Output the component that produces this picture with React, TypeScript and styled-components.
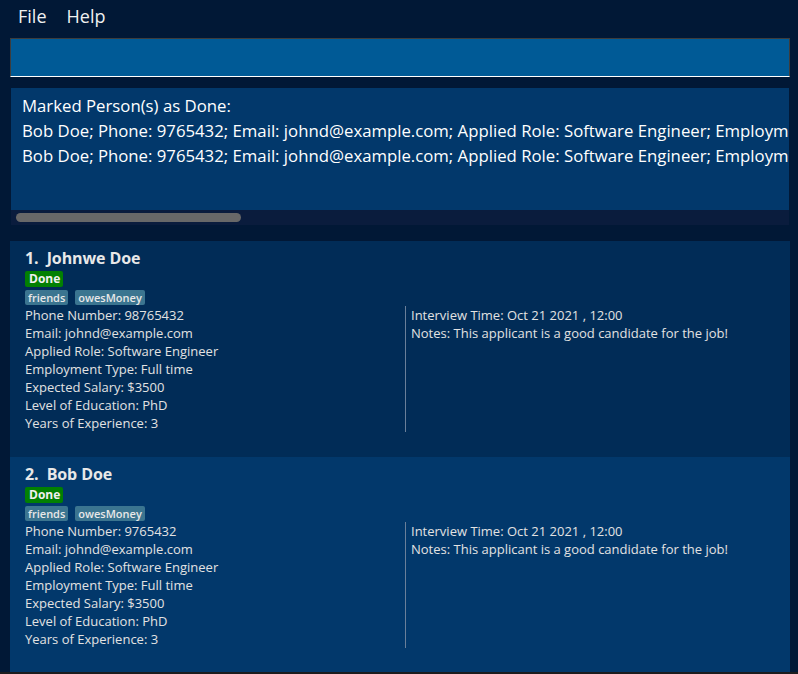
import styled, { createGlobalStyle } from "styled-components";

const GlobalStyle = createGlobalStyle`
  html, body {
    margin: 0;
    padding: 0;
    background: #011836;
    font-family: "Open Sans", "Noto Sans", sans-serif;
  }
  * { box-sizing: border-box; }
`;

type Person = {
  name: string;
  phone: string;
  tone: "dark" | "light";
};

const people: Person[] = [
  { name: "Johnwe Doe", phone: "98765432", tone: "dark" },
  { name: "Bob Doe", phone: "9765432", tone: "light" },
];

const resultLine =
  "Bob Doe; Phone: 9765432; Email: johnd@example.com; Applied Role: Software Engineer; Employment Type: Full time; Expected Salary: 3500; Level of Education: PhD; Years of Experience: 3";

export default function App() {
  return (
    <Window>
      <GlobalStyle />
      <MenuBar>
        <MenuItem>File</MenuItem>
        <MenuItem>Help</MenuItem>
      </MenuBar>
      <Body>
        <CommandBox />
        <ResultDisplay>
          <ResultText>
            <div>Marked Person(s) as Done:</div>
            <div>{resultLine}</div>
            <div>{resultLine}</div>
          </ResultText>
          <ScrollTrack>
            <ScrollThumb />
          </ScrollTrack>
        </ResultDisplay>
        <PersonList>
          {people.map((p, i) => (
            <Card key={p.name} $tone={p.tone}>
              <Name>
                {i + 1}.&nbsp;&nbsp;{p.name}
              </Name>
              <DoneBadge>Done</DoneBadge>
              <Tags>
                <Tag>friends</Tag>
                <Tag>owesMoney</Tag>
              </Tags>
              <Columns>
                <Column>
                  <Field>Phone Number: {p.phone}</Field>
                  <Field>Email: johnd@example.com</Field>
                  <Field>Applied Role: Software Engineer</Field>
                  <Field>Employment Type: Full time</Field>
                  <Field>Expected Salary: $3500</Field>
                  <Field>Level of Education: PhD</Field>
                  <Field>Years of Experience: 3</Field>
                </Column>
                <SideColumn>
                  <Field>Interview Time: Oct 21 2021 , 12:00</Field>
                  <Field>Notes: This applicant is a good candidate for the job!</Field>
                </SideColumn>
              </Columns>
            </Card>
          ))}
        </PersonList>
      </Body>
    </Window>
  );
}

const Window = styled.div`
  width: 798px;
  height: 674px;
  overflow: hidden;
  display: flex;
  flex-direction: column;
  background: #011836;
  border-bottom: 2px solid #1c1c1e;
`;

const MenuBar = styled.div`
  height: 33px;
  display: flex;
  align-items: center;
  gap: 20px;
  padding: 0 0 2px 18px;
`;

const MenuItem = styled.span`
  color: #f0f0f0;
  font-size: 18px;
`;

const Body = styled.div`
  flex: 1;
  display: flex;
  flex-direction: column;
  padding: 5px 8px 0 10px;
  min-height: 0;
`;

const CommandBox = styled.div`
  height: 39px;
  background: #005a96;
  border: 1px solid #3d3d3d;
  border-bottom: 1px solid #ffffff;
  flex-shrink: 0;
`;

const ResultDisplay = styled.div`
  margin: 11px 1px 0 1px;
  height: 137px;
  display: flex;
  flex-direction: column;
  background: #02386b;
  flex-shrink: 0;
`;

const ResultText = styled.div`
  flex: 1;
  padding: 5px 0 0 11px;
  color: #ffffff;
  font-size: 16.75px;
  line-height: 25px;
  white-space: nowrap;
  overflow: hidden;
`;

const ScrollTrack = styled.div`
  height: 15px;
  background: #0a1c3d;
  padding: 3px 0 0 5px;
`;

const ScrollThumb = styled.div`
  width: 225px;
  height: 9px;
  border-radius: 5px;
  background: #686868;
`;

const PersonList = styled.div`
  margin-top: 16px;
  flex: 1;
  display: flex;
  flex-direction: column;
  min-height: 0;
`;

const Card = styled.div<{ $tone: "dark" | "light" }>`
  height: 216px;
  flex-shrink: 0;
  display: flex;
  flex-direction: column;
  align-items: flex-start;
  padding: 6px 0 0 15px;
  background: ${(p) => (p.$tone === "dark" ? "#012c57" : "#02386b")};
  color: #e2e2e2;
`;

const Name = styled.div`
  font-size: 16px;
  font-weight: 700;
  line-height: 22px;
  color: #e8e8e8;
  letter-spacing: -0.1px;
`;

const DoneBadge = styled.span`
  background: #028002;
  color: #f0f0f0;
  font-size: 12px;
  font-weight: 700;
  line-height: 16px;
  padding: 0 3px 0 4px;
  border-radius: 2px;
  margin-top: 2px;
`;

const Tags = styled.div`
  display: flex;
  gap: 7px;
  margin-top: 3px;
`;

const Tag = styled.span`
  background: #3b7590;
  color: #e8e8e8;
  font-size: 11px;
  font-weight: 600;
  line-height: 15px;
  padding: 0 3px;
  border-radius: 2px;
`;

const Columns = styled.div`
  display: grid;
  grid-template-columns: 380px 1fr;
  width: 100%;
  margin-top: 1px;
`;

const Column = styled.div`
  display: flex;
  flex-direction: column;
`;

const SideColumn = styled(Column)`
  border-left: 1px solid #6a7f99;
  padding-left: 5px;
  height: 126px;
`;

const Field = styled.div`
  font-size: 13px;
  line-height: 18px;
  white-space: nowrap;
`;
